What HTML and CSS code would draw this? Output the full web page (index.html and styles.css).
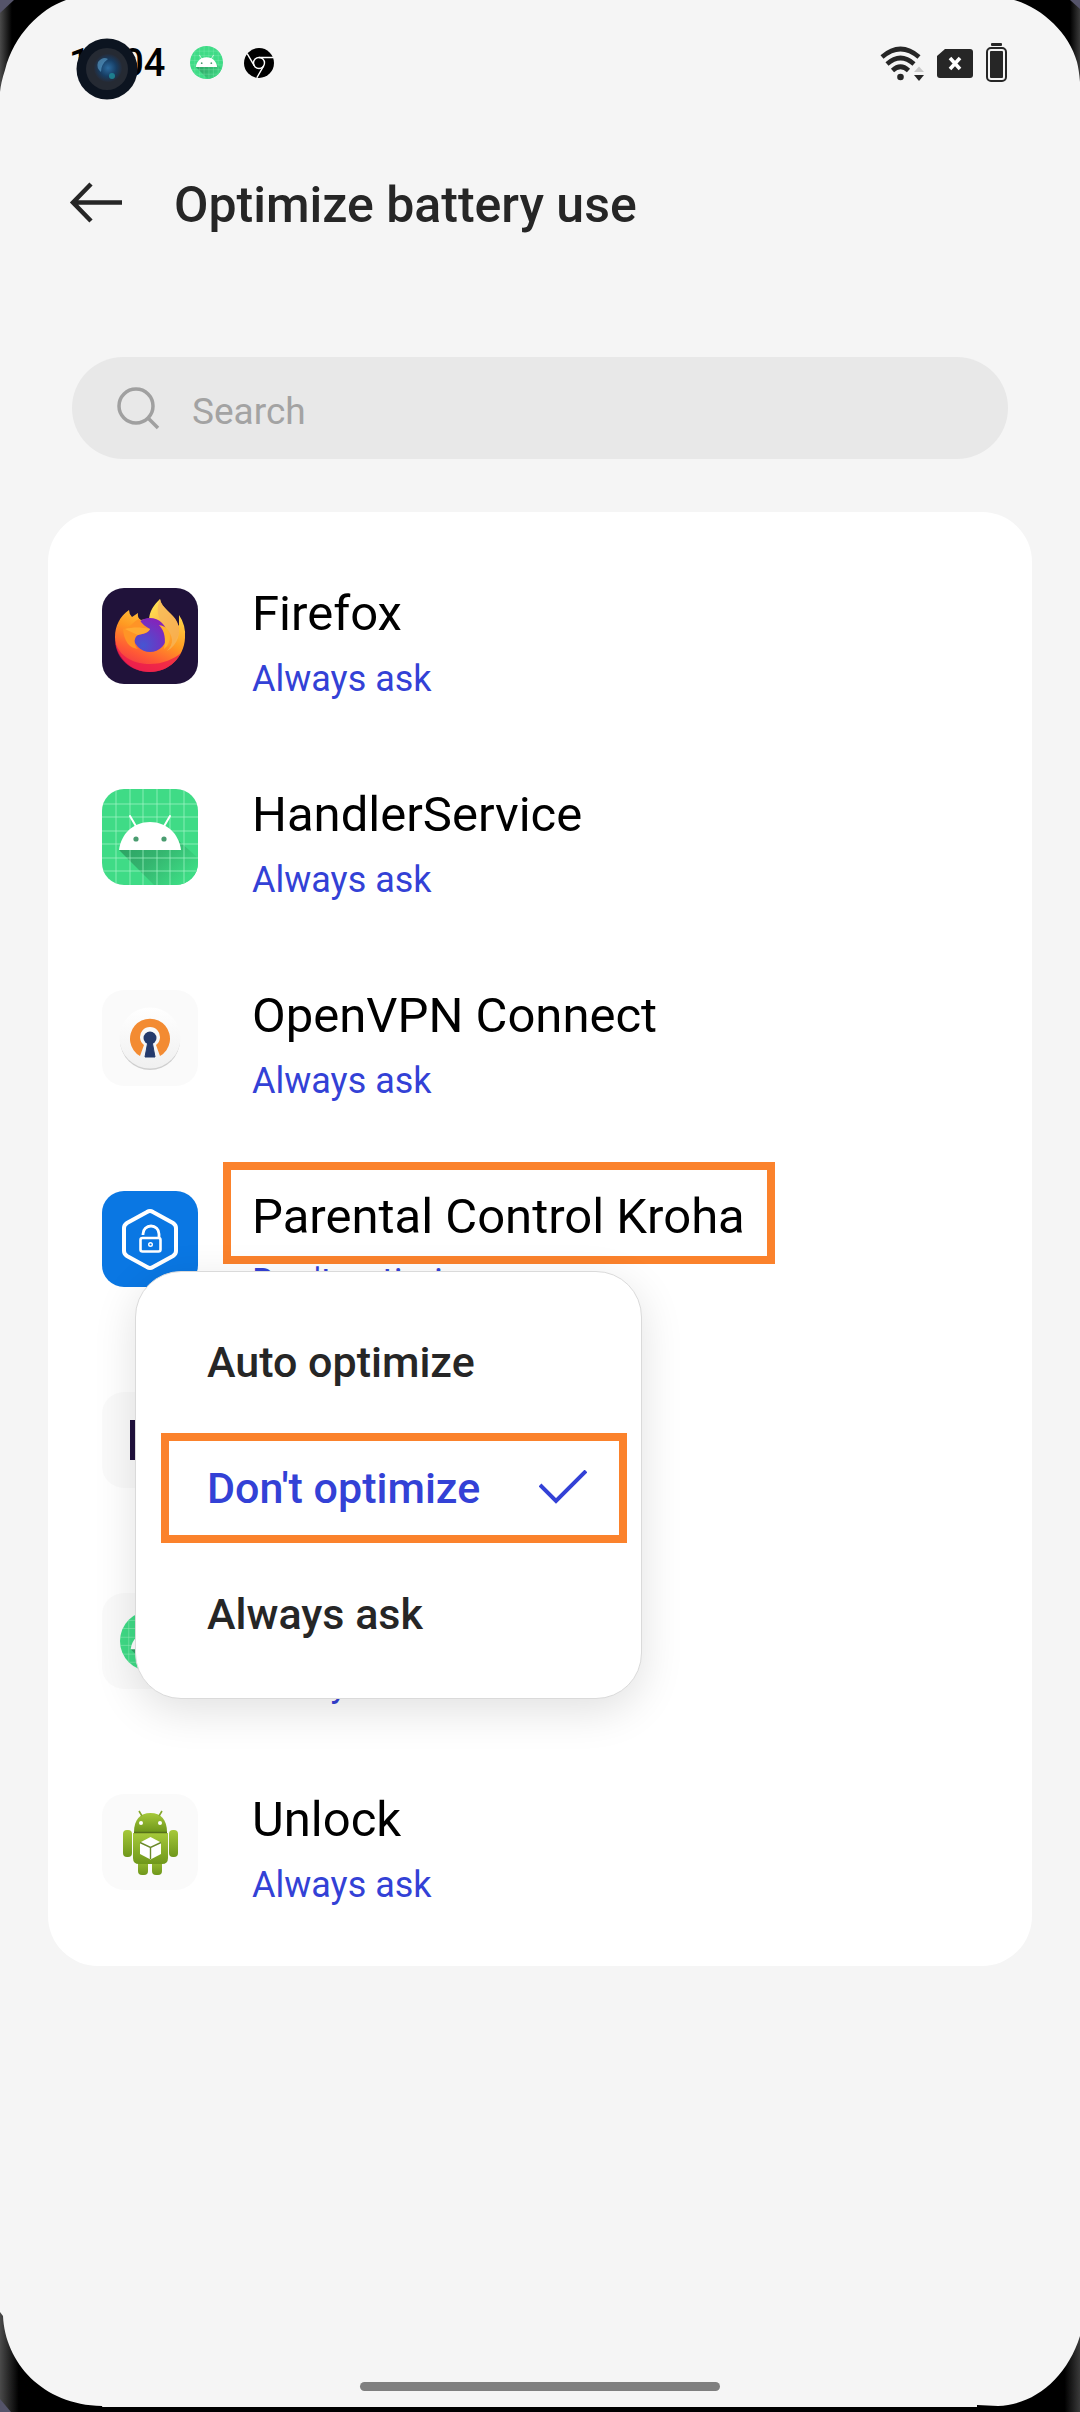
FILE: index.html
```html
<!DOCTYPE html>
<html lang="en">
<head>
    <meta charset="UTF-8">
    <meta name="viewport" content="width=device-width, initial-scale=1.0">
    <title>Optimize battery use</title>
    <link rel="stylesheet" href="styles.css">
</head>

<body>
    <!-- shared android head artwork -->
    <svg class="defs" aria-hidden="true">
        <defs>
            <linearGradient id="shade" x1="0" y1="0" x2="1" y2="0.600">
                <stop offset="0" stop-color="#2c9f62"/>
                <stop offset="0.500" stop-color="#34b56f"/>
                <stop offset="1" stop-color="#3ddc84"/>
            </linearGradient>
        </defs>
        <symbol id="android" viewBox="0 0 96 96">
            <rect width="96" height="96" fill="#3fdb86"/>
            <path d="M17 61L52 96H96V69L77 52Z" fill="url(#shade)"/>
            <path d="M14 0V96M28 0V96M41 0V96M55 0V96M68 0V96M82 0V96M0 15H96M0 28H96M0 42H96M0 55H96M0 69H96M0 82H96" stroke="#a5f5c9" stroke-opacity="0.700" stroke-width="1" fill="none"/>
            <path d="M28 27L35 39M68 27L61 39" stroke="#fff" stroke-width="2" stroke-linecap="round"/>
            <path d="M17 61C19 45 31 33 48 33S77 45 79 61Z" fill="#fff"/>
            <circle cx="34" cy="50" r="2.600" fill="#4a9c70"/>
            <circle cx="62" cy="50" r="2.600" fill="#4a9c70"/>
        </symbol>
    </svg>

    <div class="phone">
        <div class="screen">
            <div class="status-bar">
                <div class="status-left">
                    <span class="time">12:04</span>
                    <svg class="status-android" viewBox="0 0 96 96"><use href="#android"/></svg>
                    <svg width="30" height="30" viewBox="0 0 30 30">
                        <circle cx="15" cy="15" r="15" fill="#000"/>
                        <circle cx="15" cy="15" r="5.500" fill="none" stroke="#fff" stroke-width="1.400"/>
                        <path d="M15 9.500H29M10.200 17.700L3.200 5.600M19.800 17.700L12.800 29.800" stroke="#fff" stroke-width="1.400"/>
                    </svg>
                </div>
                <div class="status-right">
                    <svg width="44" height="40" viewBox="0 0 44 40" fill="none">
                        <path d="M2 14Q20.500-2 39 14M7 21Q20.500 9 34 21M12.500 27.500Q20.500 20 28.500 27.500" stroke="#262626" stroke-width="4.600"/>
                        <circle cx="20.500" cy="34" r="3.300" fill="#262626"/>
                        <path d="M34 29L39 23.500L44 29Z" fill="#c9c9c9"/>
                        <path d="M34 32H44L39 38Z" fill="#262626"/>
                    </svg>
                    <svg width="36" height="30" viewBox="0 0 36 30">
                        <path d="M8 1H33Q36 1 36 4V27Q36 30 33 30H3Q0 30 0 27V8Z" fill="#262626"/>
                        <path d="M13 10L23 21M23 10L13 21" stroke="#fff" stroke-width="3.600"/>
                    </svg>
                    <svg width="21" height="40" viewBox="0 0 21 40">
                        <rect x="5" y="0" width="11" height="3" rx="1" fill="#262626"/>
                        <rect x="1" y="5" width="19" height="33" rx="4" fill="none" stroke="#262626" stroke-width="2"/>
                        <rect x="4" y="8" width="13" height="27" rx="1" fill="#262626"/>
                    </svg>
                </div>
                <svg class="camera" width="62" height="62" viewBox="0 0 62 62">
                    <defs>
                        <radialGradient id="lens">
                            <stop offset="0" stop-color="#2c6b9f"/>
                            <stop offset="0.600" stop-color="#173d63"/>
                            <stop offset="1" stop-color="#252b38"/>
                        </radialGradient>
                    </defs>
                    <circle cx="31" cy="31" r="30.500" fill="#0c1420"/>
                    <circle cx="31" cy="31" r="21" fill="#252a33"/>
                    <circle cx="32" cy="30" r="14" fill="url(#lens)"/>
                    <path d="M22 24Q27 18 32 21Q25 26 25 34Q20 30 22 24Z" fill="#5fa3cf" opacity="0.600"/>
                    <circle cx="36" cy="38" r="3" fill="#1f8f9a" opacity="0.800"/>
                </svg>
            </div>

            <header class="header">
                <button type="button" class="back" aria-label="Back">
                    <svg width="54" height="42" viewBox="0 0 54 42" fill="none" stroke="#262626" stroke-width="4.500">
                        <path d="M53 20.500H4M22 2L4 20.500L22 39"/>
                    </svg>
                </button>
                <h1>Optimize battery use</h1>
            </header>

            <label class="search">
                <svg width="44" height="44" viewBox="0 0 44 44" fill="none" stroke="#a0a0a0" stroke-width="3.500">
                    <circle cx="19" cy="20" r="17"/>
                    <path d="M31 32L41 42"/>
                </svg>
                <input type="search" placeholder="Search" aria-label="Search">
            </label>

            <ul class="app-list">
                <li class="app">
                    <button type="button" class="app-row">
                        <svg class="app-icon" viewBox="0 0 96 96">
                            <defs>
                                <linearGradient id="fire" x1="0.800" y1="0" x2="0.300" y2="1">
                                    <stop offset="0" stop-color="#ffd84a"/>
                                    <stop offset="0.450" stop-color="#ff9a22"/>
                                    <stop offset="0.750" stop-color="#ff5a35"/>
                                    <stop offset="1" stop-color="#f0304c"/>
                                </linearGradient>
                                <linearGradient id="tail" x1="0" y1="0" x2="0.600" y2="1">
                                    <stop offset="0" stop-color="#ffef55"/>
                                    <stop offset="0.500" stop-color="#ffc04a"/>
                                    <stop offset="1" stop-color="#ff9a26"/>
                                </linearGradient>
                                <radialGradient id="globe" cx="0.300" cy="0.800" r="0.900">
                                    <stop offset="0" stop-color="#4655d2"/>
                                    <stop offset="1" stop-color="#8a1fb8"/>
                                </radialGradient>
                            </defs>
                            <rect width="96" height="96" fill="#20123a"/>
                            <path d="M27 22Q27 26 30 29L36 25Q35 30 39 32L60 28L77 38V27Q84 37 83 50C82 70 66 84 48 84C29 84 13 69 13 49C13 38 18 28 27 22Z" fill="url(#fire)"/>
                            <path d="M13 53C17 69 32 76 48 76C61 76 72 71 79 65C73 77 61 84 48 84C29 84 14 71 13 53Z" fill="#e9164f" opacity="0.700"/>
                            <path d="M58 11C52 17 47 23 47 33C57 35 66 44 64 59C76 54 80 43 75 34C71 25 59 20 58 11Z" fill="url(#tail)"/>
                            <path d="M58 11C54 20 55 30 63 39C72 48 72 56 65 63C76 57 80 44 75 34C71 25 60 21 58 11Z" fill="#f5b65c" opacity="0.750"/>
                            <circle cx="48" cy="47" r="17" fill="url(#globe)"/>
                            <path d="M57 37C66 38 70 46 67 54C66 57 64 59 62 61C64 52 63 43 57 37Z" fill="#ffb22e"/>
                            <path d="M21 41C28 40 33 32 37 31C40 36 44 39 48 41C47 45 40 46 36 47C31 50 32 58 36 61C27 60 22 53 21 41Z" fill="#ff9426"/>
                            <path d="M23 41C31 39 38 39 48 41C46 45 39 46 36 47C31 45 27 43 23 41Z" fill="#ffab32"/>
                        </svg>
                        <span class="app-text">
                            <span class="app-name">Firefox</span>
                            <span class="app-mode">Always ask</span>
                        </span>
                    </button>
                </li>

                <li class="app">
                    <button type="button" class="app-row">
                        <svg class="app-icon" viewBox="0 0 96 96"><use href="#android"/></svg>
                        <span class="app-text">
                            <span class="app-name">HandlerService</span>
                            <span class="app-mode">Always ask</span>
                        </span>
                    </button>
                </li>

                <li class="app">
                    <button type="button" class="app-row">
                        <svg class="app-icon" viewBox="0 0 96 96">
                            <defs>
                                <linearGradient id="disc" x1="0" y1="0" x2="0" y2="1">
                                    <stop offset="0" stop-color="#fff"/>
                                    <stop offset="1" stop-color="#f0f0f0"/>
                                </linearGradient>
                            </defs>
                            <circle cx="48" cy="50" r="30" fill="#cfcfcf"/>
                            <circle cx="48" cy="48" r="30.500" fill="url(#disc)"/>
                            <path d="M38 66A20 20 0 1 1 58 66L54 55A10 10 0 1 0 42 55Z" fill="#f38b32"/>
                            <circle cx="48" cy="48" r="6.500" fill="#253a6b"/>
                            <path d="M46 51H50L53 67H43Z" fill="#253a6b" stroke="#253a6b"/>
                        </svg>
                        <span class="app-text">
                            <span class="app-name">OpenVPN Connect</span>
                            <span class="app-mode">Always ask</span>
                        </span>
                    </button>
                </li>

                <li class="app">
                    <button type="button" class="app-row" aria-haspopup="menu" aria-expanded="true">
                        <svg class="app-icon" viewBox="0 0 96 96" fill="none" stroke="#fff">
                            <rect width="96" height="96" fill="#0a77e3" stroke="none"/>
                            <path d="M45 21Q48 19 51 21L71 32Q74 34 74 37V60Q74 63 71 65L51 76Q48 78 45 76L25 65Q22 63 22 60V37Q22 34 25 32Z" stroke-width="4"/>
                            <rect x="38.500" y="47" width="20" height="13.500" rx="2" stroke-width="2.600"/>
                            <path d="M41 44V43A8 8 0 0 1 57 43V47" stroke-width="2.800"/>
                            <circle cx="48.500" cy="53.500" r="1.800" stroke-width="1.400"/>
                        </svg>
                        <span class="app-text">
                            <span class="app-name highlight">Parental Control Kroha</span>
                            <span class="app-mode">Don't optimize</span>
                        </span>
                    </button>

                    <div class="menu" role="menu">
                        <button type="button" class="menu-item" role="menuitemradio" aria-checked="false">Auto optimize</button>
                        <button type="button" class="menu-item selected" role="menuitemradio" aria-checked="true">
                            Don't optimize
                            <svg width="48" height="36" viewBox="0 0 48 36" fill="none" stroke="#3341d6" stroke-width="4">
                                <path d="M1 15L17 31L47 1"/>
                            </svg>
                        </button>
                        <button type="button" class="menu-item" role="menuitemradio" aria-checked="false">Always ask</button>
                    </div>
                </li>

                <li class="app">
                    <button type="button" class="app-row" aria-label="App">
                        <svg class="app-icon" viewBox="0 0 96 96">
                            <rect x="28" y="28" width="40" height="40" fill="#21113f"/>
                        </svg>
                    </button>
                </li>

                <li class="app">
                    <button type="button" class="app-row">
                        <svg class="app-icon" viewBox="0 0 96 96">
                            <clipPath id="round"><circle cx="48" cy="48" r="30"/></clipPath>
                            <g clip-path="url(#round)"><use href="#android" x="18" y="18" width="60" height="60"/></g>
                        </svg>
                        <span class="app-text">
                            <span class="app-name"></span>
                            <span class="app-mode">Always ask</span>
                        </span>
                    </button>
                </li>

                <li class="app">
                    <button type="button" class="app-row">
                        <svg class="app-icon" viewBox="0 0 96 96">
                            <defs>
                                <linearGradient id="robot" x1="0" y1="0" x2="0" y2="1">
                                    <stop offset="0" stop-color="#a6c93a"/>
                                    <stop offset="1" stop-color="#6f971b"/>
                                </linearGradient>
                            </defs>
                            <g fill="url(#robot)">
                                <path d="M32 38C32 26 38 19 48.500 19S65 26 65 38Z"/>
                                <rect x="21" y="36" width="9" height="27" rx="4"/>
                                <rect x="67" y="36" width="9" height="27" rx="4"/>
                                <rect x="36" y="62" width="10" height="19" rx="4"/>
                                <rect x="50" y="62" width="10" height="19" rx="4"/>
                                <path d="M31 39H66V64Q66 70 60 70H37Q31 70 31 64Z"/>
                            </g>
                            <path d="M37 17L40 22M60 17L57 22" stroke="#86a82c" stroke-width="1.600"/>
                            <path d="M32 38.500H65" stroke="#56701a" stroke-width="1.500"/>
                            <circle cx="39" cy="29" r="2" fill="#fff"/>
                            <circle cx="58" cy="29" r="2" fill="#fff"/>
                            <path d="M48.500 43L59 48.500V60L48.500 65.500L38 60V48.500Z" fill="#fff"/>
                            <path d="M38 48.500L48.500 53.500L59 48.500M48.500 53.500V65" fill="none" stroke="#6b8a2a" stroke-width="1.400"/>
                        </svg>
                        <span class="app-text">
                            <span class="app-name">Unlock</span>
                            <span class="app-mode">Always ask</span>
                        </span>
                    </button>
                </li>
            </ul>

            <div class="nav-bar"></div>
        </div>

        <!-- phone bezel corners -->
        <svg class="corner top-left" width="66" height="100" viewBox="0 0 66 100">
            <defs>
                <linearGradient id="edge" x1="0" y1="0" x2="1" y2="0">
                    <stop offset="0" stop-color="#4a4a4a"/>
                    <stop offset="0.180" stop-color="#000"/>
                </linearGradient>
                <linearGradient id="edge-right" x1="1" y1="0" x2="0" y2="0">
                    <stop offset="0" stop-color="#3a3a3a"/>
                    <stop offset="0.150" stop-color="#000"/>
                </linearGradient>
            </defs>
            <path d="M0 0H66C40 9 14 35 5 70Q1 82 0 92Z" fill="url(#edge)"/>
            <path d="M0 0H14L0 13Z" fill="#55546a"/>
        </svg>
        <svg class="corner top-right" width="66" height="100" viewBox="0 0 66 100">
            <path d="M66 0H0C28 8 55 33 63 62Q65 70 66 82Z" fill="url(#edge-right)"/>
            <path d="M66 0H56L66 9Z" fill="#55546a"/>
        </svg>
        <svg class="corner bottom-left" width="104" height="100" viewBox="0 0 104 100">
            <path d="M0 0L3 4C5 50 42 93 102 94L104 100H0Z" fill="url(#edge)"/>
            <path d="M0 87L11 100H0Z" fill="#55546a"/>
        </svg>
        <svg class="corner bottom-right" width="104" height="100" viewBox="0 0 104 100">
            <path d="M104 24C91 66 58 93 22 94L1 93V100H104Z" fill="url(#edge-right)"/>
        </svg>
    </div>
</body>
</html>
```
FILE: styles.css
```css
* {
    box-sizing: border-box;
}

body {
    margin: 0;
    background-color: #000;
    font-family: Roboto, "Liberation Sans", sans-serif;
    color: #262626;
}

button {
    border: none;
    background: none;
    padding: 0;
    margin: 0;
    font: inherit;
    color: inherit;
    text-align: left;
    cursor: pointer;
}

svg {
    display: block;
    flex-shrink: 0;
}

.defs {
    position: absolute;
    width: 0;
    height: 0;
}

.phone {
    position: relative;
    min-height: 100vh;
    padding-bottom: 5px;
    overflow: hidden;
}

.screen {
    display: flex;
    flex-direction: column;
    min-height: calc(100vh - 5px);
    background-color: #f5f5f5;
}

/* status bar */
.status-bar {
    position: relative;
    display: flex;
    justify-content: space-between;
    align-items: center;
    height: 125px;
    padding: 0 73px 0 69px;
}

.status-left,
.status-right {
    display: flex;
    align-items: center;
}

.status-left {
    gap: 21px;
}

.status-right {
    gap: 13px;
}

.time {
    margin-right: 4px;
    font-size: 38px;
    font-weight: 500;
    color: #000;
}

.status-android {
    width: 33px;
    height: 33px;
    border-radius: 50%;
}

.camera {
    position: absolute;
    left: 76px;
    top: 38px;
}

/* header */
.header {
    display: flex;
    align-items: center;
    gap: 51px;
    height: 155px;
    padding: 0 69px;
}

h1 {
    margin: 0;
    padding-top: 4px;
    font-size: 50px;
    font-weight: 500;
}

/* search */
.search {
    display: flex;
    align-items: center;
    gap: 31px;
    height: 102px;
    margin: 77px 72px 53px;
    padding: 0 45px;
    border-radius: 51px;
    background-color: #e8e8e8;
}

.search input {
    flex: 1;
    min-width: 0;
    border: none;
    outline: none;
    padding: 6px 0 0;
    background: none;
    font: inherit;
    font-size: 37px;
    color: #262626;
}

.search input::placeholder {
    color: #a3a3a3;
}

/* app list */
.app-list {
    list-style: none;
    margin: 0 48px;
    padding: 23px 0 24px;
    border-radius: 50px;
    background-color: #fff;
}

.app {
    position: relative;
}

.app-row {
    display: flex;
    align-items: center;
    gap: 54px;
    width: 100%;
    height: 201px;
    padding: 0 54px;
}

.app-icon {
    width: 96px;
    height: 96px;
    border-radius: 22px;
    background-color: #fafafa;
}

.app-text {
    display: flex;
    flex-direction: column;
    gap: 10px;
    padding-top: 14px;
}

.app-name {
    min-height: 62px;
    font-size: 49px;
    line-height: 62px;
    color: #000;
}

.app-mode {
    font-size: 36px;
    line-height: 48px;
    color: #3341d6;
}

/* orange marks */
.highlight,
.selected {
    position: relative;
}

.highlight::after,
.selected::after {
    content: "";
    position: absolute;
    border: 8px solid #fb822c;
}

.highlight::after {
    inset: -24px -30px -16px -29px;
}

.selected::after {
    inset: 11px 14px 5px 25px;
}

/* popup menu */
.menu {
    position: absolute;
    z-index: 2;
    left: 87px;
    top: 133px;
    width: 507px;
    padding: 24px 0;
    border: 1px solid #dadada;
    border-radius: 46px;
    background-color: #fff;
    box-shadow: 0 12px 44px rgba(0, 0, 0, 0.12);
}

.menu-item {
    display: flex;
    justify-content: space-between;
    align-items: center;
    width: 100%;
    height: 126px;
    padding: 6px 54px 0 71px;
    font-size: 43px;
    font-weight: 500;
}

.selected {
    color: #3341d6;
}

/* bottom gesture bar */
.nav-bar {
    width: 33.33%;
    height: 9px;
    margin: auto auto 16px;
    border-radius: 5px;
    background-color: #7f7f7f;
}

/* bezel */
.corner {
    position: absolute;
}

.top-left {
    top: 0;
    left: 0;
}

.top-right {
    top: 0;
    right: 0;
}

.bottom-left {
    bottom: 0;
    left: 0;
}

.bottom-right {
    bottom: 0;
    right: 0;
}
```
